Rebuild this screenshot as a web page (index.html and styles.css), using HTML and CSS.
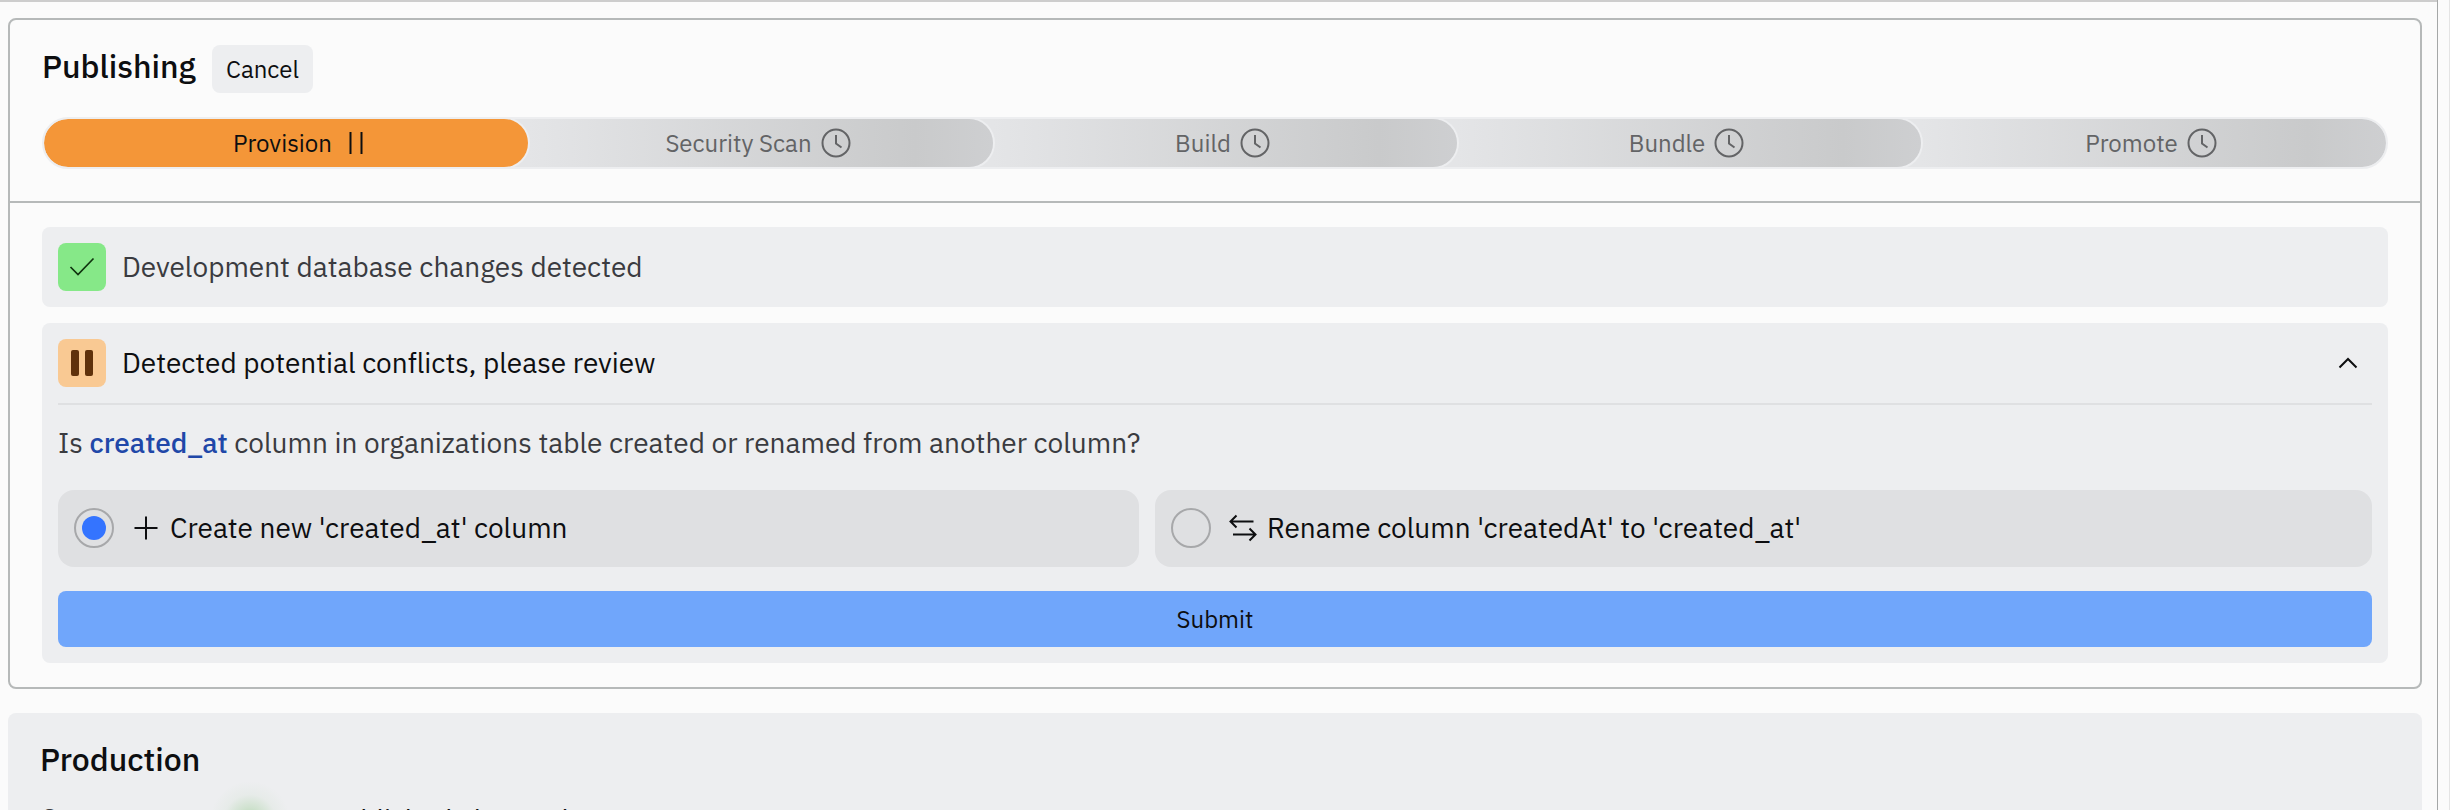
FILE: index.html
```
<!DOCTYPE html>
<html lang="en">
<head>
<meta charset="utf-8">
<title>Publishing</title>
<link rel="stylesheet" href="styles.css">
</head>
<body>
<div class="page">
<main class="content">
  <section class="panel">
    <header class="panel-head">
      <div class="title-row"><h2 class="title">Publishing</h2><button class="cancel">Cancel</button></div>
      <div class="steps">
        <div class="step step-active"><span>Provision</span><svg class="pause" viewBox="0 0 32 32"><path d="M10.500 5v22M21.500 5v22"/></svg></div>
        <div class="step s2"><span>Security Scan</span><svg class="clock" viewBox="0 0 32 32"><circle cx="16" cy="16" r="13.500"/><path d="M16 8v8.500l5.500 4"/></svg></div>
        <div class="step s3"><span>Build</span><svg class="clock" viewBox="0 0 32 32"><circle cx="16" cy="16" r="13.500"/><path d="M16 8v8.500l5.500 4"/></svg></div>
        <div class="step s4"><span>Bundle</span><svg class="clock" viewBox="0 0 32 32"><circle cx="16" cy="16" r="13.500"/><path d="M16 8v8.500l5.500 4"/></svg></div>
        <div class="step s5"><span>Promote</span><svg class="clock" viewBox="0 0 32 32"><circle cx="16" cy="16" r="13.500"/><path d="M16 8v8.500l5.500 4"/></svg></div>
      </div>
    </header>
    <div class="panel-body">
      <div class="card card-done">
        <span class="badge badge-ok"><svg viewBox="0 0 48 48"><path d="M12.500 24l7.500 7.500L35.500 15.500"/></svg></span>
        <span>Development database changes detected</span>
      </div>
      <div class="card card-review">
        <div class="review-head">
          <span class="badge badge-wait"><svg viewBox="0 0 48 48"><rect x="13" y="11" width="8" height="26" rx="2"/><rect x="27" y="11" width="8" height="26" rx="2"/></svg></span>
          <span>Detected potential conflicts, please review</span>
          <svg class="chevron" viewBox="0 0 24 24"><path d="M3.500 16.500L12 8l8.500 8.500"/></svg>
        </div>
        <p class="question">Is <strong>created_at</strong> column in organizations table created or renamed from another column?</p>
        <div class="options">
          <label class="option"><span class="radio radio-on"></span><svg class="opt-icon" viewBox="0 0 32 32"><path d="M16 4.500v23M4.500 16h23"/></svg><span class="opt-text">Create new 'created_at' column</span></label>
          <label class="option"><span class="radio"></span><svg class="opt-icon" viewBox="0 0 32 32"><path d="M26.500 9.500H4M9.500 3.500L3.500 9.500l6 6M6 22.500h22M22.500 16.500l6 6-6 6"/></svg><span class="opt-text">Rename column 'createdAt' to 'created_at'</span></label>
        </div>
        <button class="submit">Submit</button>
      </div>
    </div>
  </section>
  <section class="production">
    <h2 class="title">Production</h2>
    <div class="status"><span class="status-label">Current</span><span class="glow"></span><span class="status-text">published about 1 hour ago</span></div>
  </section>
</main>
<aside class="gutter"></aside>
</div>
</body>
</html>
```
FILE: styles.css
```
* { box-sizing: border-box; }
body { margin: 0; background: #fbfbfb; color: #0d0e10; font-family: "IBM Plex Sans", Roboto, "Noto Sans", sans-serif; font-size: 28px; line-height: 36px; }
svg { fill: none; stroke: currentColor; stroke-width: 2; flex: none; }
button { border: 0; font: inherit; color: inherit; padding: 0; }
span { white-space: pre; }
.page { display: flex; width: 2450px; height: 810px; overflow: hidden; }
.content { width: 2437px; border-top: 2px solid #cdcdcd; padding: 16px 15px 0 8px; flex: none; }
.gutter { width: 13px; border-left: 1px solid #a5a7a7; border-right: 1px solid #e4e4e4; }
.panel { height: 671px; border: 2px solid #b6b9b9; border-radius: 8px; width: 2414px; }
.panel-head { height: 183px; border-bottom: 2px solid #b6b9b9; padding: 25px 32px 0; }
.title { margin: 0; font-size: 32px; line-height: 40px; font-weight: 500; }
.title-row { display: flex; height: 48px; align-items: flex-start; }
.title-row .title { width: 170px; padding-top: 1px; }
.cancel { width: 101px; height: 48px; border-radius: 8px; background: #edeef0; font-size: 24px; }
.steps { display: flex; margin-top: 24px; width: 2346px; height: 52px; border: 2px solid #edeef0; border-radius: 26px; background: #e4e5e7; overflow: hidden; }
.step { position: relative; display: flex; align-items: center; justify-content: center; gap: 8px; height: 48px; font-size: 24px; color: #636466; flex: none; border-radius: 0 24px 24px 0; width: 488px; margin-left: -24px; padding-left: 20px; background: linear-gradient(90deg, #e4e5e7 5%, #c9cacb 84%, #cecfd1); box-shadow: 0 0 0 2px #edeef0; }
.step-active { width: 484px; margin-left: 0; padding-left: 33px; background: #f49638; color: #0d0e10; border-radius: 24px; z-index: 5; }
.s2 { z-index: 4; width: 489px; }
.s3 { z-index: 3; }
.s4 { z-index: 2; width: 488px; }
.s5 { z-index: 1; width: 489px; }
.clock { width: 32px; height: 32px; }
.pause { width: 32px; height: 32px; }
.panel-body { padding: 24px 32px; display: flex; flex-direction: column; gap: 16px; }
.card { background: #edeef0; border-radius: 8px; padding: 0 16px; }
.card-done { height: 80px; display: flex; align-items: center; gap: 16px; color: #3a3b40; }
.badge { width: 48px; height: 48px; border-radius: 8px; flex: none; }
.badge svg { display: block; width: 48px; height: 48px; }
.badge-ok { background: #86e888; color: #10340f; }
.badge-ok svg { stroke-width: 1.7; }
.badge-wait { background: #f9c993; }
.badge-wait svg { fill: #5f310b; stroke: none; }
.card-review { height: 340px; }
.review-head { height: 82px; border-bottom: 2px solid #dfe0e2; display: flex; align-items: center; gap: 16px; padding-right: 12px; }
.chevron { width: 24px; height: 24px; margin-left: auto; }
.question { margin: 20px 0 0; height: 36px; color: #3a3b40; }
.question strong { color: #2047a8; font-weight: 500; }
.options { display: flex; gap: 16px; margin-top: 29px; }
.option { display: flex; align-items: center; height: 77px; border-radius: 16px; background: #dfe0e2; padding: 0 0 1px 16px; width: 1217px; }
.option:first-child { width: 1081px; }
.radio { width: 40px; height: 40px; border: 2px solid #a7a8aa; border-radius: 50%; display: flex; align-items: center; justify-content: center; }
.radio-on::after { content: ""; width: 24px; height: 24px; border-radius: 50%; background: #3474ff; }
.opt-icon { width: 32px; height: 32px; margin: 0 8px 0 16px; }
.submit { display: block; width: 100%; height: 56px; margin-top: 24px; border-radius: 8px; background: #70a6fb; font-size: 24px; }
.production { width: 2414px; height: 200px; margin-top: 24px; border-radius: 8px; background: #edeef0; padding: 26px 32px 0; }
.status { display: flex; align-items: center; height: 36px; margin-top: 24px; }
.status-label { width: 170px; color: #3a3b40; padding-bottom: 4px; }
.status-text { padding-bottom: 3px; }
.glow { width: 80px; height: 80px; margin-right: 38px; flex: none; background: radial-gradient(circle closest-side, rgba(110, 185, 100, .5), rgba(120, 190, 110, .26) 33%, rgba(130, 190, 120, .06) 66%, transparent); }
```
